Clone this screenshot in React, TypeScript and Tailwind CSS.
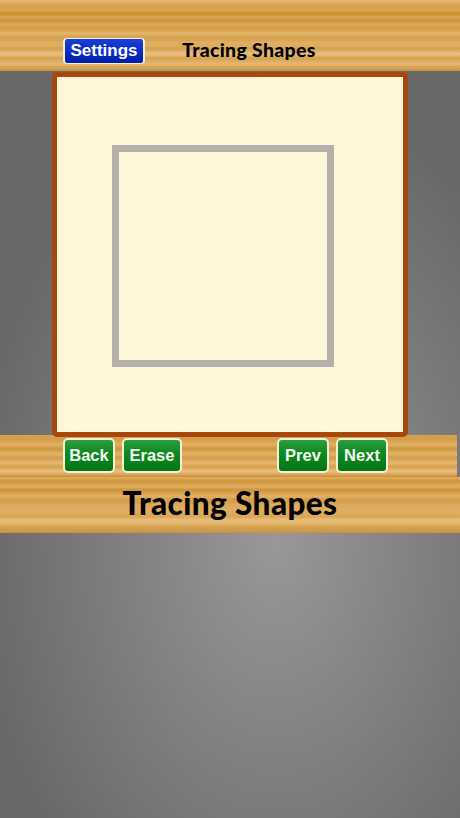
const woodTop =
  "bg-[repeating-linear-gradient(180deg,rgba(255,236,190,0.1)_0px,rgba(255,236,190,0)_3px,rgba(150,90,15,0.06)_4px,rgba(255,236,190,0)_6px,rgba(255,236,190,0.06)_9px),linear-gradient(180deg,#e3b56f_0px,#dba653_5px,#d69c42_8px,#d9a044_11px,#cb9134_14px,#d9a44f_17px,#c98f33_20px,#dca855_24px,#d1973c_28px,#e3b670_33px,#d49c44_37px,#e0ae66_42px,#d8a44e_48px,#e8bc7e_54px,#d9a452_58px,#e2b36c_64px,#dba556_68px,#c48d40_71px)]";
const woodMid =
  "bg-[repeating-linear-gradient(180deg,rgba(255,236,190,0.1)_0px,rgba(255,236,190,0)_3px,rgba(150,90,15,0.06)_4px,rgba(255,236,190,0)_6px,rgba(255,236,190,0.06)_9px),linear-gradient(180deg,#cf9a4a_0px,#d9a24c_5px,#deaa5c_10px,#d2993f_14px,#e0af68_19px,#d59e48_23px,#e3b36c_28px,#d8a44f_32px,#e8bb7c_36px,#dba554_40px,#c48c3c_42px)]";
const woodBottom =
  "bg-[repeating-linear-gradient(180deg,rgba(255,236,190,0.1)_0px,rgba(255,236,190,0)_3px,rgba(150,90,15,0.06)_4px,rgba(255,236,190,0)_6px,rgba(255,236,190,0.06)_9px),linear-gradient(180deg,#dca554_0px,#d19840_5px,#ddaa5c_9px,#cf963c_13px,#deab60_19px,#d59e48_25px,#e1b068_32px,#d8a44e_38px,#e7bb7b_43px,#dca958_49px,#cb943c_54px,#bf8b3a_56px)]";

const handFont = "font-['Lato',sans-serif] font-black text-black";

const GreenButton = ({ label, width }: { label: string; width: string }) => {
  return (
    <div
      className={`${width} flex h-[35px] items-center justify-center rounded-[5px] border-2 border-[#f3f0d8] bg-[linear-gradient(180deg,#2f9c40_0%,#0f8a24_40%,#057512_100%)] font-['Liberation_Sans',sans-serif] text-[16.5px] font-bold text-[#f6fbf2]`}
    >
      {label}
    </div>
  );
};

export default function App() {
  return (
    <div className="flex h-[818px] w-[460px] flex-col overflow-hidden bg-[#666666] bg-[radial-gradient(ellipse_300px_450px_at_275px_540px,#989898_0%,#686868_100%)] bg-no-repeat">
      <div className={`${woodTop} flex h-[71px] items-end pb-[7px] pl-[63px]`}>
        <div className="flex h-[26px] w-[82px] items-center justify-center rounded-[4px] border-x-2 border-y border-[#f5f0dc] bg-[linear-gradient(180deg,#1c3fd6_0%,#0a2cc8_50%,#001fa8_100%)] font-['Liberation_Sans',sans-serif] text-[17px] font-bold text-white">
          Settings
        </div>
        <div className={`${handFont} ml-[37px] h-[26px] w-[134px] whitespace-nowrap text-[19.5px] leading-[24px] tracking-[0.3px]`}>
          Tracing Shapes
        </div>
      </div>

      <div className="relative z-10 ml-[52px] mt-px flex h-[365px] w-[356px] items-center justify-center rounded-[5px] border-[5px] border-[#a8470c] bg-[#fff5d8]">
        <div className="mr-[14px] mt-[3px] h-[222px] w-[222px] border-[7px] border-[#b5b1a8]" />
      </div>

      <div className={`${woodMid} -mt-[2px] flex h-[42px] w-[457px] items-start pl-[63px] pt-[3px]`}>
        <GreenButton label="Back" width="w-[52px]" />
        <div className="ml-[7px]">
          <GreenButton label="Erase" width="w-[60px]" />
        </div>
        <div className="ml-[95px]">
          <GreenButton label="Prev" width="w-[52px]" />
        </div>
        <div className="ml-[7px]">
          <GreenButton label="Next" width="w-[52px]" />
        </div>
      </div>

      <div className={`${woodBottom} flex h-[56px] items-center justify-center`}>
        <div className={`${handFont} pb-[2px] text-[31.5px] leading-none tracking-[0.4px]`}>Tracing Shapes</div>
      </div>
    </div>
  );
}
